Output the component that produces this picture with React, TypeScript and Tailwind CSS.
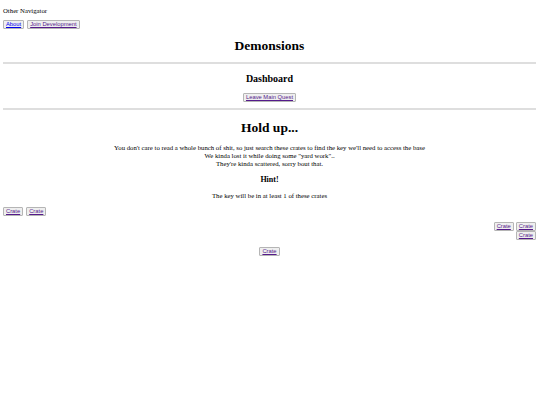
import React from "react";

const Btn: React.FC<{ label: string; visited?: boolean }> = ({ label, visited = true }) => (
	<button className="bg-[#efefef] border border-[#b5b5b5] rounded-[1px] px-[2px] h-[9px] leading-[7px] font-['Liberation_Sans',sans-serif] text-[5.8px]">
		<span className={`underline ${visited ? "text-[#551a8b]" : "text-[#0000ee]"}`}>{label}</span>
	</button>
);

export default function App() {
	return (
		<div className="min-h-[405px] bg-white pl-[3px] pr-[4px] pt-[7px] font-['Liberation_Serif',serif] text-[6.75px] leading-[8px] text-black">
			<p>Other Navigator</p>
			<div className="mt-[5px] flex gap-[3px]">
				<Btn label="About" visited={false} />
				<Btn label="Join Development" />
			</div>

			<h1 className="mt-[9px] text-center text-[13.5px] leading-[16px] font-bold">Demonsions</h1>
			<hr className="mt-[8px] border-t-2 border-[#dedede]" />

			<h2 className="mt-[9px] text-center text-[10px] leading-[12px] font-bold">Dashboard</h2>
			<div className="mt-[8px] flex justify-center">
				<Btn label="Leave Main Quest" />
			</div>
			<hr className="mt-[6px] border-t-2 border-[#dedede]" />

			<h1 className="mt-[10px] text-center text-[13.5px] leading-[16px] font-bold">Hold up...</h1>
			<div className="mt-[8px] text-center">
				<p>You don't care to read a whole bunch of shit, so just search these crates to find the key we'll need to access the base</p>
				<p>We kinda lost it while doing some "yard work"..</p>
				<p>They're kinda scattered, sorry bout that.</p>
			</div>
			<h3 className="mt-[7px] text-center text-[8px] leading-[10px] font-bold">Hint!</h3>
			<p className="mt-[7px] text-center">The key will be in at least 1 of these crates</p>

			<div className="mt-[7px] flex gap-[3px]">
				<Btn label="Crate" />
				<Btn label="Crate" />
			</div>
			<div className="mt-[6px] flex flex-col items-end">
				<div className="flex gap-[2px]">
					<Btn label="Crate" />
					<Btn label="Crate" />
				</div>
				<Btn label="Crate" />
			</div>
			<div className="mt-[7px] flex justify-center">
				<Btn label="Crate" />
			</div>
		</div>
	);
}
